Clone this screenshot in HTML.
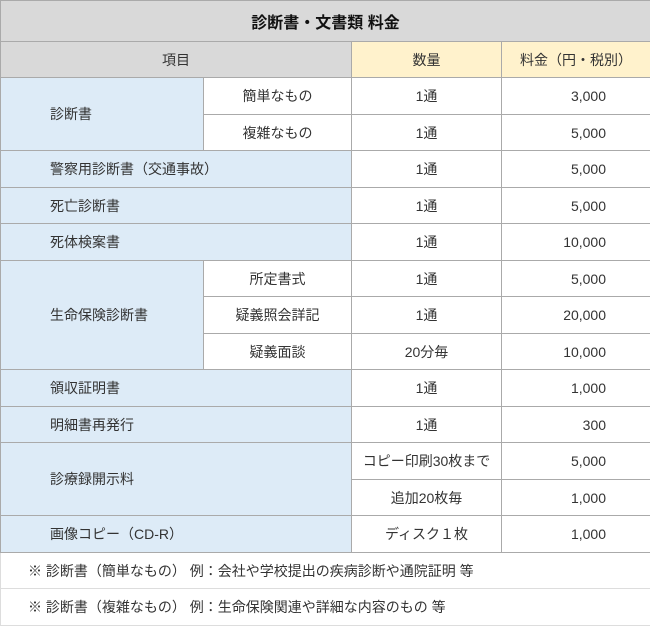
<!DOCTYPE html>
<html><head><meta charset="utf-8"><style>
html,body{margin:0;padding:0;background:#fff;}
table{border-collapse:collapse;table-layout:fixed;width:650px;font-family:"Liberation Sans","Noto Sans CJK JP",sans-serif;font-size:14px;color:#333;}
td{border:1px solid #aaa;padding:0;text-align:center;white-space:nowrap;overflow:hidden;}
.t{background:#d9d9d9;font-weight:bold;font-size:16px;color:#111;}
.h{background:#d9d9d9;}
.y{background:#fff2cc;}
.b{background:#ddebf7;}
.l{text-align:left;padding-left:49px;}
.r{text-align:right;padding-right:44px;}
.n{text-align:left;padding-left:27px;border-color:#ddd;}
</style></head><body>
<table>
<colgroup><col style="width:203px"><col style="width:148px"><col style="width:150px"><col style="width:149px"></colgroup>
<tr style="height:41px"><td class="t" colspan="4">診断書・文書類 料金</td></tr>
<tr style="height:36px"><td class="h" colspan="2">項目</td><td class="y">数量</td><td class="y">料金（円・税別）</td></tr>
<tr style="height:37px"><td class="b l" rowspan="2">診断書</td><td>簡単なもの</td><td>1通</td><td class="r">3,000</td></tr>
<tr style="height:36px"><td>複雑なもの</td><td>1通</td><td class="r">5,000</td></tr>
<tr style="height:37px"><td class="b l" colspan="2">警察用診断書（交通事故）</td><td>1通</td><td class="r">5,000</td></tr>
<tr style="height:36px"><td class="b l" colspan="2">死亡診断書</td><td>1通</td><td class="r">5,000</td></tr>
<tr style="height:37px"><td class="b l" colspan="2">死体検案書</td><td>1通</td><td class="r">10,000</td></tr>
<tr style="height:36px"><td class="b l" rowspan="3">生命保険診断書</td><td>所定書式</td><td>1通</td><td class="r">5,000</td></tr>
<tr style="height:37px"><td>疑義照会詳記</td><td>1通</td><td class="r">20,000</td></tr>
<tr style="height:36px"><td>疑義面談</td><td>20分毎</td><td class="r">10,000</td></tr>
<tr style="height:37px"><td class="b l" colspan="2">領収証明書</td><td>1通</td><td class="r">1,000</td></tr>
<tr style="height:36px"><td class="b l" colspan="2">明細書再発行</td><td>1通</td><td class="r">300</td></tr>
<tr style="height:37px"><td class="b l" colspan="2" rowspan="2">診療録開示料</td><td>コピー印刷30枚まで</td><td class="r">5,000</td></tr>
<tr style="height:36px"><td>追加20枚毎</td><td class="r">1,000</td></tr>
<tr style="height:37px"><td class="b l" colspan="2">画像コピー（CD-R）</td><td>ディスク１枚</td><td class="r">1,000</td></tr>
<tr style="height:36px"><td class="n" colspan="4">※ 診断書（簡単なもの） 例：会社や学校提出の疾病診断や通院証明 等</td></tr>
<tr style="height:37px"><td class="n" colspan="4">※ 診断書（複雑なもの） 例：生命保険関連や詳細な内容のもの 等</td></tr>
</table>
</body></html>
